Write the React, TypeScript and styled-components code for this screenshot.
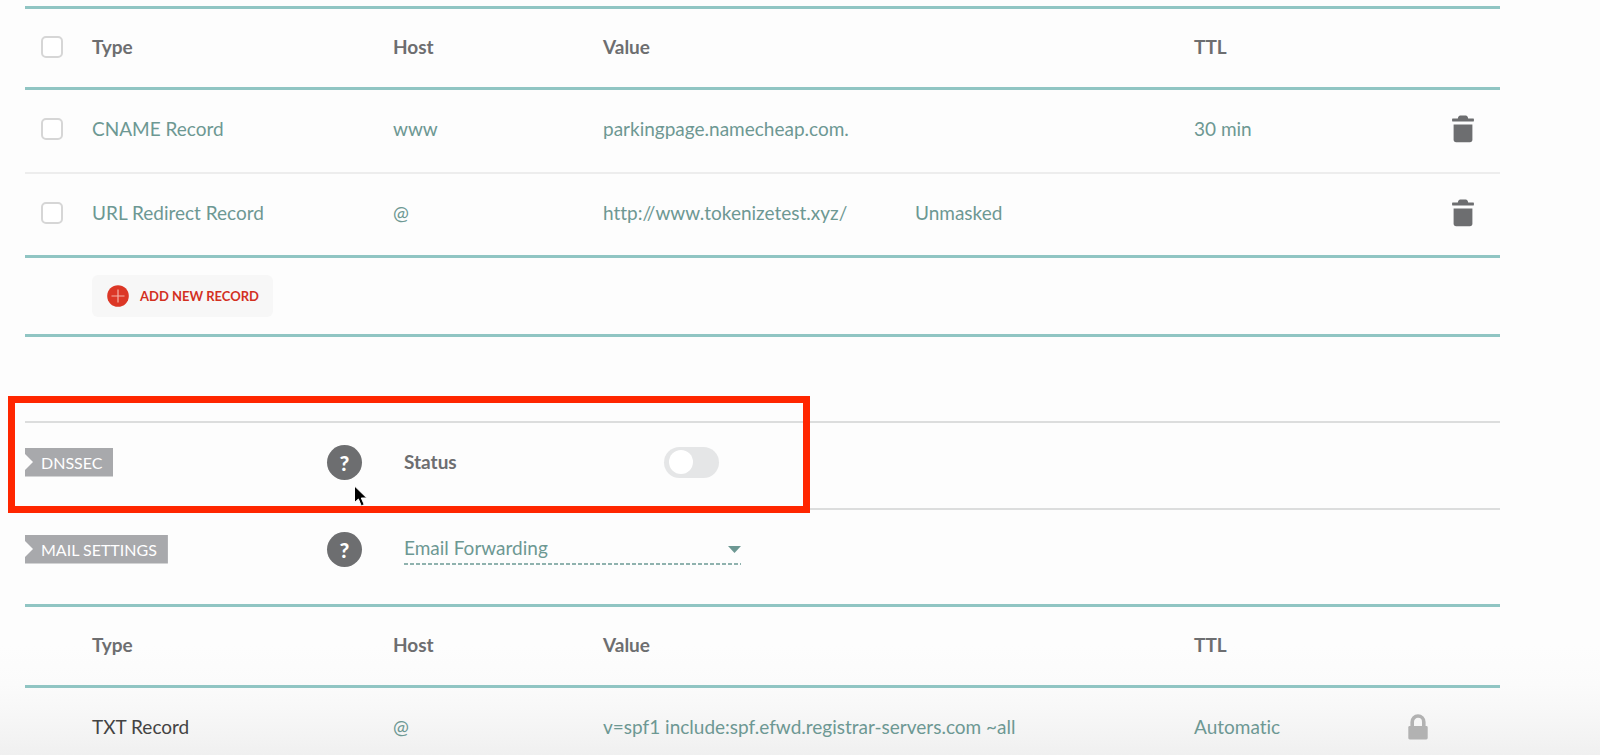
import React, { useState } from 'react';
import styled, { createGlobalStyle } from 'styled-components';

const TEAL_TEXT = '#6d9893';
const LINE = '#90c5c3';
const DARK = '#6d6e70';

const GlobalStyle = createGlobalStyle`
  *, *::before, *::after { box-sizing: border-box; }
  body {
    margin: 0;
    background: #fdfdfd;
    color: ${TEAL_TEXT};
    font: 19px/24px Lato, "Open Sans", sans-serif;
    font-variant-ligatures: none;
  }
  button, input, select { font: inherit; color: inherit; }
`;

const Page = styled.main`
  min-height: 100vh;
  padding: 6px 100px 0 25px;
  background: linear-gradient(to top, #f0f0f0 0, #f7f7f7 40px, #fbfbfb 70px, #fdfdfd 110px);
`;

const Table = styled.table`
  width: 100%;
  table-layout: fixed;
  border-spacing: 0;
  border-top: 3px solid ${LINE};
`;

const Col = styled.col<{ $w?: number }>`
  width: ${(p) => (p.$w ? `${p.$w}px` : 'auto')};
`;

const HeadCell = styled.th`
  height: 81px;
  padding: 0 0 2px;
  border-bottom: 3px solid ${LINE};
  color: ${DARK};
  font-weight: 700;
  text-align: left;
`;

const rowEdge = {
  thin: 'padding: 25px 0 29px; border-bottom: 2px solid #ededed;',
  teal: `padding: 25px 0 28px; border-bottom: 3px solid ${LINE};`,
  none: 'padding: 25px 0 0;',
};

const Row = styled.tr<{ $edge: keyof typeof rowEdge }>`
  > td {
    ${(p) => rowEdge[p.$edge]}
    white-space: nowrap;
  }
`;

const Dark = styled.span`
  color: #434343;
`;

const Checkbox = styled.input`
  appearance: none;
  display: block;
  width: 22px;
  height: 22px;
  margin: 0 0 0 16px;
  border: 2px solid #d6d6d6;
  border-radius: 5px;
  background: #fff;
  &:checked { background: ${LINE}; }
`;

const Actions = styled.div<{ $inset: number }>`
  display: flex;
  justify-content: flex-end;
  padding-right: ${(p) => p.$inset}px;
`;

const IconButton = styled.button`
  display: flex;
  padding: 0;
  border: 0;
  background: none;
  color: ${DARK};
  cursor: pointer;
`;

const AddBar = styled.div`
  display: flex;
  align-items: center;
  height: 79px;
  padding-left: 67px;
  border-bottom: 3px solid ${LINE};
`;

const AddButton = styled.button`
  display: flex;
  align-items: center;
  gap: 11px;
  height: 42px;
  padding: 0 14px 0 15px;
  border: 0;
  border-radius: 6px;
  background: #f7f7f7;
  color: #d3301f;
  font-size: 13px;
  font-weight: 700;
  line-height: 18px;
  white-space: nowrap;
  cursor: pointer;
`;

const Settings = styled.section`
  position: relative;
  display: grid;
  grid-template-columns: 302px 77px 260px 1fr;
  align-items: center;
  height: 87px;
  border-top: 2px solid #dcdddd;
`;

const DnsSec = styled(Settings)`
  margin-top: 84px;
  padding-bottom: 7px;
`;

const MailSettings = styled(Settings)`
  grid-template-columns: 302px 77px 337px;
  height: 96px;
  padding-bottom: 16px;
`;

const Tag = styled.h2`
  justify-self: start;
  height: 29px;
  margin: 0;
  padding: 0 11px 0 16px;
  background: #a8a9ac;
  color: #fff;
  font-size: 16px;
  font-weight: 400;
  line-height: 29px;
  clip-path: polygon(0 0, 100% 0, 100% 100%, 0 100%, 0 78%, 8px 50%, 0 22%);
`;

const Help = styled.button`
  width: 35px;
  height: 35px;
  padding: 0;
  border: 0;
  border-radius: 50%;
  background: ${DARK};
  color: #fff;
  font-size: 21px;
  font-weight: 900;
  line-height: 35px;
  text-align: center;
`;

const StatusLabel = styled.label`
  color: ${DARK};
  font-weight: 700;
`;

const Switch = styled.input`
  appearance: none;
  display: flex;
  align-items: center;
  width: 55px;
  height: 31px;
  margin: 0;
  padding: 0 5px;
  border-radius: 16px;
  background: #e5e6e7;
  &::before {
    content: '';
    width: 24px;
    height: 24px;
    border-radius: 50%;
    background: #fff;
  }
  &:checked { justify-content: flex-end; background: ${LINE}; }
`;

const SelectWrap = styled.div`
  display: grid;
  align-items: center;
  background: repeating-linear-gradient(to right, #8fb2ae 0 4px, transparent 4px 6px) bottom / 100% 2px no-repeat;
  > * { grid-area: 1 / 1; }
`;

const Select = styled.select`
  appearance: none;
  width: 100%;
  height: 32px;
  padding: 0 24px 2px 0;
  border: 0;
  background: none;
`;

const Caret = styled.svg`
  justify-self: end;
  pointer-events: none;
`;

const Highlight = styled.div`
  position: absolute;
  top: -27px;
  left: -17px;
  width: 802px;
  height: 117px;
  border: 7px solid #ff2600;
  pointer-events: none;
  z-index: 2;
`;

const Pointer = styled.svg`
  position: absolute;
  top: 62px;
  left: 328px;
  z-index: 1;
  pointer-events: none;
`;

const TrashIcon = () => (
  <svg width="22" height="28" viewBox="0 0 22 28" fill="currentColor" aria-hidden="true">
    <path d="M0.5 3.5H5.8C6.4 1.2 7 0.5 8.2 0.5h5.6c1.2 0 1.8 0.7 2.4 3H21.5a.4.4 0 0 1 .4.4V6a.4.4 0 0 1-.4.4H.5A.4.4 0 0 1 .1 6V3.9a.4.4 0 0 1 .4-.4Z" />
    <path d="M1.6 9.4h18.8v15.2a2.6 2.6 0 0 1-2.6 2.6H4.2a2.6 2.6 0 0 1-2.6-2.6Z" />
  </svg>
);

const LockIcon = () => (
  <svg width="20" height="28" viewBox="0 -1 20 28" role="img" aria-label="Locked">
    <path d="M4.2 14V8a5.8 6 0 0 1 11.6 0v6" fill="none" stroke="#b2b2b2" strokeWidth="3.6" />
    <rect x="0.3" y="12" width="19.4" height="13.4" rx="1.4" fill="#b2b2b2" />
  </svg>
);

const PlusIcon = () => (
  <svg width="22" height="22" viewBox="0 0 22 22" aria-hidden="true">
    <circle cx="11" cy="11" r="10.8" fill="#dc3726" />
    <path d="M11 4.5v13M4.5 11h13" stroke="#f6b3a8" strokeWidth="1.2" />
  </svg>
);

const Columns = () => (
  <colgroup>
    <Col $w={67} />
    <Col $w={301} />
    <Col $w={210} />
    <Col $w={312} />
    <Col />
    <Col $w={192} />
    <Col $w={114} />
  </colgroup>
);

const HeadLabels = () => (
  <>
    <HeadCell scope="col">Type</HeadCell>
    <HeadCell scope="col">Host</HeadCell>
    <HeadCell scope="col" colSpan={2}>Value</HeadCell>
    <HeadCell scope="col">TTL</HeadCell>
    <HeadCell aria-label="Actions" />
  </>
);

const records = [
  { type: 'CNAME Record', host: 'www', value: 'parkingpage.namecheap.com.', mask: '', ttl: '30 min' },
  { type: 'URL Redirect Record', host: '@', value: 'http://www.tokenizetest.xyz/', mask: 'Unmasked', ttl: '' },
];

export default function App() {
  const [secure, setSecure] = useState(false);
  return (
    <>
      <GlobalStyle />
      <Page>
        <Table>
          <Columns />
          <thead>
            <tr>
              <HeadCell><Checkbox type="checkbox" aria-label="Select all records" /></HeadCell>
              <HeadLabels />
            </tr>
          </thead>
          <tbody>
            {records.map((r, i) => (
              <Row key={r.type} $edge={i === records.length - 1 ? 'teal' : 'thin'}>
                <td><Checkbox type="checkbox" aria-label={`Select ${r.type}`} /></td>
                <td>{r.type}</td>
                <td>{r.host}</td>
                <td>{r.value}</td>
                <td>{r.mask}</td>
                <td>{r.ttl}</td>
                <td>
                  <Actions $inset={26}>
                    <IconButton type="button" aria-label={`Delete ${r.type}`}><TrashIcon /></IconButton>
                  </Actions>
                </td>
              </Row>
            ))}
          </tbody>
        </Table>
        <AddBar>
          <AddButton type="button"><PlusIcon />ADD NEW RECORD</AddButton>
        </AddBar>

        <DnsSec>
          <Tag>DNSSEC</Tag>
          <Help type="button" aria-label="About DNSSEC">?</Help>
          <StatusLabel htmlFor="dnssec">Status</StatusLabel>
          <Switch id="dnssec" type="checkbox" role="switch" checked={secure} onChange={(e) => setSecure(e.target.checked)} />
          <Pointer width="16" height="24" viewBox="0 0 16 24" aria-hidden="true">
            <path d="M1.5 1v16.6l3.9-3.6 2.9 6.9 2.9-1.3-2.9-6.6h5.5Z" fill="#000" stroke="#fff" strokeWidth="1" />
          </Pointer>
          <Highlight />
        </DnsSec>

        <MailSettings>
          <Tag>MAIL SETTINGS</Tag>
          <Help type="button" aria-label="About mail settings">?</Help>
          <SelectWrap>
            <Select aria-label="Mail settings" defaultValue="forward">
              <option value="forward">Email Forwarding</option>
              <option value="custom">Custom MX</option>
            </Select>
            <Caret width="13" height="7" viewBox="0 0 13 7" aria-hidden="true">
              <path d="M0 0h13L6.5 7Z" fill={TEAL_TEXT} />
            </Caret>
          </SelectWrap>
        </MailSettings>

        <Table>
          <Columns />
          <thead>
            <tr>
              <HeadCell aria-label="Selection" />
              <HeadLabels />
            </tr>
          </thead>
          <tbody>
            <Row $edge="none">
              <td />
              <td><Dark>TXT Record</Dark></td>
              <td>@</td>
              <td colSpan={2}>v=spf1 include:spf.efwd.registrar-servers.com ~all</td>
              <td>Automatic</td>
              <td><Actions $inset={72}><LockIcon /></Actions></td>
            </Row>
          </tbody>
        </Table>
      </Page>
    </>
  );
}
